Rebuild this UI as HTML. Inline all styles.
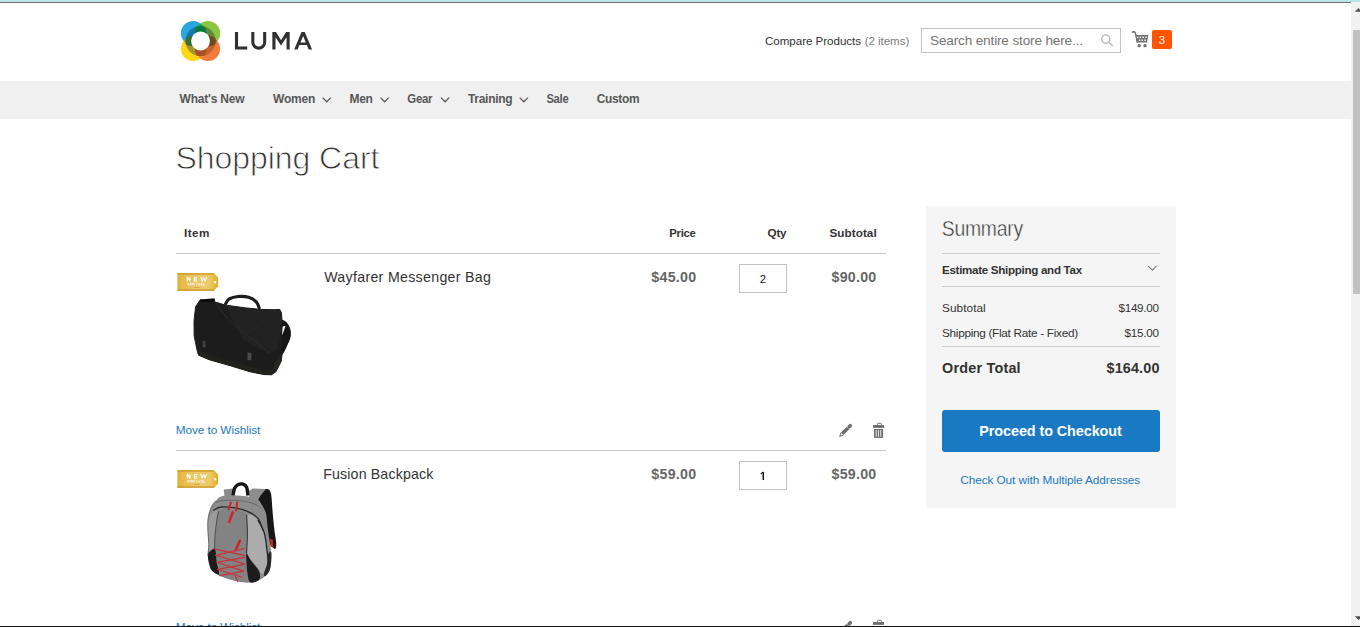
<!DOCTYPE html>
<html lang="en">
<head>
<meta charset="utf-8">
<title>Shopping Cart</title>
<style>
html,body{margin:0;padding:0;background:#fff;overflow:hidden;}
body{width:1360px;height:627px;position:relative;font-family:"Liberation Sans",sans-serif;}
.a{position:absolute;}
#topbar1{left:0;top:0;width:1360px;height:2px;background:#b9e3e7;}
#topbar2{left:0;top:2px;width:1351px;height:1px;background:#6c726f;}
#nav{left:0;top:81px;width:1351px;height:38px;background:#f0f0f0;}
#sbtrack{left:1351px;top:2px;width:9px;height:624px;background:#f1f1f1;}
#sbthumb{left:1353px;top:30px;width:7px;height:264px;background:#c1c1c1;}
#bottomline{left:0;top:626px;width:1360px;height:1px;background:#0c0c0c;}
#search{left:921px;top:28px;width:198px;height:23px;border:1px solid #c2c2c2;background:#fff;}
#badge3{left:1152px;top:30px;width:20px;height:19px;background:#ff5501;border-radius:2px;}
.hl{height:1px;background:#cccccc;}
.qty{width:46px;height:27px;border:1px solid #c2c2c2;background:#fff;left:739px;}
#summary{left:926px;top:206px;width:250px;height:302px;background:#f5f5f5;}
#btn{left:942px;top:410px;width:218px;height:42px;background:#1979c3;border-radius:3px;}
svg{position:absolute;left:0;top:0;overflow:visible;}
svg text{font-family:"Liberation Sans",sans-serif;white-space:pre;}
</style>
</head>
<body>
<div class="a" id="topbar1"></div>
<div class="a" id="topbar2"></div>
<div class="a" id="nav"></div>
<div class="a" id="sbtrack"></div>
<div class="a" id="sbthumb"></div>
<div class="a" id="search"></div>
<div class="a" id="badge3"></div>
<div class="a" id="summary"></div>
<div class="a" id="btn"></div>

<!-- table lines -->
<div class="a hl" style="left:176px;top:253px;width:710px;"></div>
<div class="a hl" style="left:176px;top:450px;width:710px;"></div>
<!-- summary lines -->
<div class="a hl" style="left:942px;top:253px;width:218px;"></div>
<div class="a hl" style="left:942px;top:286px;width:218px;"></div>
<div class="a hl" style="left:942px;top:346px;width:218px;"></div>
<!-- qty boxes -->
<div class="a qty" style="top:264px;"></div>
<div class="a qty" style="top:461px;"></div>

<!--IMAGES_START-->
<svg width="1360" height="627" viewBox="0 0 1360 627">
<defs>
<filter id="soft" x="-5%" y="-5%" width="110%" height="110%"><feGaussianBlur stdDeviation="0.55"/></filter>
<filter id="soft2" x="-5%" y="-5%" width="110%" height="110%"><feGaussianBlur stdDeviation="0.3"/></filter>
<linearGradient id="gold" x1="0" y1="0" x2="1" y2="0">
 <stop offset="0" stop-color="#dfae34"/><stop offset="0.12" stop-color="#e6bb4c"/><stop offset="0.5" stop-color="#ecca6c"/><stop offset="0.8" stop-color="#ecc968"/><stop offset="1" stop-color="#e2ac22"/>
</linearGradient>
<linearGradient id="goldv" x1="0" y1="0" x2="0" y2="1">
 <stop offset="0" stop-color="#c9961d" stop-opacity=".9"/><stop offset="0.14" stop-color="#d9a92f" stop-opacity=".0"/><stop offset="0.86" stop-color="#d9a92f" stop-opacity="0"/><stop offset="1" stop-color="#c9961d" stop-opacity=".9"/>
</linearGradient>
<g id="badge">
 <path d="M177.4,272.9 H213.7 L218.1,277.6 V286.6 L213.7,291.1 H177.4 Z" fill="url(#gold)"/>
 <path d="M177.4,272.9 H213.7 L218.1,277.6 V286.6 L213.7,291.1 H177.4 Z" fill="url(#goldv)"/>
 <rect x="214.1" y="281.1" width="2.1" height="2.2" fill="#fff"/>
 <path d="M187.25,281.4 V276.9 L190.05,281.4 V276.9 M197.05,277.4 H194.4 V280.9 H197.05 M194.4,279.15 H196.6 M200.75,276.9 L202.2,281.2 L203.65,277.6 L205.1,281.2 L206.55,276.9" fill="none" stroke="#fff" stroke-width="1.05" stroke-linejoin="bevel"/>
 <path d="M187.25,285.35 L188.25,283.25 L189.25,285.35 M187.70,284.65 H188.80 M189.97,285.35 V283.25 H191.47 V284.30 H189.97 M190.77,284.30 L191.77,285.35 M192.69,285.35 V283.25 H194.19 V284.30 H192.69 M193.49,284.30 L194.49,285.35 M196.41,283.25 V285.35 M198.13,283.25 L199.13,285.35 L200.13,283.25 M200.85,285.35 L201.85,283.25 L202.85,285.35 M201.30,284.65 H202.40 M203.57,283.25 V285.35 H205.27" fill="none" stroke="#fff" stroke-width="0.7" opacity=".85"/>
 <path d="M178.6,274.5 H213.2 M178.6,289.5 H213.2" stroke="#c4952a" stroke-width="0.6" opacity=".75" fill="none"/>
 <rect x="194" y="287.3" width="5.6" height="0.7" fill="#b98a25" opacity=".7"/>
</g>
</defs>
<g filter="url(#soft)">
<path d="M281.4,321.1 C282.1,318.8 284.7,320.8 286.2,322.1 C287.7,323.5 289.6,326.6 290.3,329.1 C291.0,331.6 291.2,334.1 290.6,337.0 C290.0,339.8 288.2,343.5 286.8,346.4 C285.4,349.3 284.1,352.7 282.3,354.4 C280.5,356.1 277.5,357.3 275.9,356.7 C274.3,356.0 272.4,352.9 272.9,350.6 C273.3,348.3 277.1,345.6 278.6,343.0 C280.2,340.5 281.5,339.1 282.0,335.5 C282.4,331.8 280.7,323.3 281.4,321.1 Z" fill="#141414"/>
<path d="M225.6,303.9 C226.2,303.1 226.9,300.3 228.9,299.1 C231.0,297.9 234.7,296.8 238.0,296.5 C241.3,296.2 245.6,296.4 248.6,297.3 C251.7,298.2 254.4,300.1 256.2,301.8 C258.0,303.6 258.7,306.9 259.2,307.9" fill="none" stroke="#1a1a1a" stroke-width="3.1" stroke-linecap="round"/>
<path d="M200.2,299.8 L207.7,300.6 L215.3,302.1 L225.9,305.2 L245.6,307.9 L260.8,309.4 L274.4,309.7 L279.7,309.4 L281.4,312.7 L282.0,320.3 L282.3,335.5 L282.0,355.2 L281.2,361.2 L275.9,371.8 L271.4,374.8 L263.8,374.5 L250.2,371.8 L230.5,365.8 L209.2,359.7 L198.6,355.2 L197.1,350.6 L194.1,335.5 L194.1,320.3 L195.6,306.7 Z" fill="#1b1b1b" stroke="#1b1b1b" stroke-width="1" stroke-linejoin="round"/>
<path d="M196.4,308.2 C199.1,302.9 207.3,301.2 213.0,303.6 C218.7,306.0 229.2,316.5 230.5,322.6 C231.7,328.6 226.3,337.9 220.6,340.0 C214.9,342.1 200.4,340.8 196.4,335.5 C192.3,330.2 193.6,313.5 196.4,308.2 Z" fill="#252525" opacity=".35"/>
<path d="M200.2,299.4 L214.5,298.3 L215.3,301.8 L201.7,302.1 Z" fill="#101010"/>
<path d="M225.9,305.2 L245.6,307.9 L260.8,309.4 L274.4,309.7 L279.7,309.4 L281.4,312.7 L282.0,320.3 L278.9,347.6 L269.8,353.6 L242.6,340.0 Z" fill="#232323"/>
<path d="M198.6,350.6 L209.2,354.4 L230.5,360.5 L250.2,366.5 L263.8,369.5 L272.1,369.5 L275.9,371.8 L271.4,374.8 L263.8,374.5 L250.2,371.8 L230.5,365.8 L209.2,359.7 L198.6,355.2 Z" fill="#23231f"/>
<path d="M272.1,369.5 L278.9,355.2 L282.0,355.2 L281.2,361.2 L275.9,371.8 Z" fill="#262622"/>
<path d="M282.7,326.4 L285.6,325.8 L283.5,331.7 L282.0,335.5 Z" fill="#fff"/>
<path d="M215.3,302.1 C217.8,305.4 225.4,316.5 230.5,321.8 C235.5,327.1 239.0,328.6 245.6,333.9 C252.2,339.2 265.8,350.4 269.8,353.6" fill="none" stroke="#2e2e2e" stroke-width="0.8"/>
<path d="M245.6,333.9 C247.4,332.7 253.2,328.6 256.2,326.4 C259.2,324.1 262.5,321.3 263.8,320.3" fill="none" stroke="#2c2c2c" stroke-width="0.6"/>
<path d="M202.4,340.8 L205.5,341.2 L205.8,347.6 L202.7,347.3 Z" fill="#3d3d3d"/>
<path d="M247.4,352.4 L251.4,353.0 L251.4,360.5 L247.4,360.0 Z" fill="#484848"/>
</g>
<g filter="url(#soft)">
<path d="M258.0,492.4 C259.5,491.0 264.6,488.8 266.7,489.1 C268.9,489.3 270.0,489.8 271.0,493.8 C271.9,497.8 272.1,507.0 272.7,513.1 C273.3,519.3 273.9,525.7 274.5,530.7 C275.0,535.7 276.1,539.9 276.2,543.0 C276.3,546.0 276.0,548.5 275.2,549.0 C274.3,549.4 272.3,547.2 271.1,545.6 C270.0,544.0 269.0,542.5 268.1,539.5 C267.3,536.4 266.8,531.6 266.0,527.2 C265.3,522.8 264.6,516.9 263.6,513.1 C262.6,509.3 261.1,506.9 260.1,504.3 C259.1,501.8 258.0,499.7 257.6,497.7 C257.3,495.7 256.4,493.8 258.0,492.4 Z" fill="#171717"/>
<path d="M248.3,491.2 L252.7,488.5 L265.9,488.9 L260.6,495.6 L258.0,500.0 L249.2,497.0 Z" fill="#8d8d8d"/>
<path d="M223.7,489.4 L233.4,488.5 L233.7,495.9 L224.6,496.3 Z" fill="#8b8b8b"/>
<path d="M233.0,495.6 C233.3,494.3 233.8,490.0 234.6,488.2 C235.4,486.4 236.5,485.3 237.9,484.7 C239.3,484.0 241.6,483.7 243.0,484.1 C244.5,484.6 245.7,485.2 246.5,487.1 C247.4,489.0 247.7,494.2 247.9,495.6" fill="none" stroke="#161616" stroke-width="3.4"/>
<path d="M215.8,500.8 C217.3,499.4 218.1,497.3 221.1,496.4 C224.0,495.6 229.0,495.6 233.4,495.6 C237.8,495.6 243.3,495.7 247.4,496.4 C251.5,497.2 255.6,498.6 258.0,500.0 C260.3,501.3 260.2,502.1 261.5,504.3 C262.8,506.5 264.8,509.3 265.9,513.1 C266.9,516.9 267.0,522.8 267.6,527.2 C268.2,531.6 268.8,535.4 269.4,539.5 C270.0,543.6 270.8,548.0 271.1,551.8 C271.4,555.6 271.4,559.1 271.1,562.3 C270.8,565.5 270.4,568.7 269.4,571.1 C268.3,573.4 266.9,574.7 265.0,576.3 C263.1,578.0 260.6,579.7 258.0,580.7 C255.3,581.8 253.0,582.5 249.2,582.5 C245.4,582.5 239.8,581.8 235.1,580.7 C230.4,579.7 224.9,578.0 221.1,576.3 C217.3,574.7 214.2,572.8 212.3,571.1 C210.4,569.3 210.4,568.4 209.7,565.8 C208.9,563.2 208.0,558.8 207.9,555.3 C207.8,551.8 208.8,548.8 208.8,544.7 C208.8,540.6 208.0,534.8 207.9,530.7 C207.8,526.6 207.6,523.4 207.9,520.1 C208.2,516.9 208.9,513.9 209.7,511.4 C210.4,508.9 211.3,507.0 212.3,505.2 C213.3,503.5 214.3,502.3 215.8,500.8 Z" fill="#8c8c8c"/>
<path d="M208.8,520.1 C209.5,517.2 210.8,514.6 212.3,513.1 C213.8,511.7 217.1,508.4 217.6,511.4 C218.0,514.3 215.5,524.4 214.9,530.7 C214.3,537.0 215.0,545.6 214.0,549.1 C213.1,552.6 210.0,552.5 209.1,551.8 C208.3,551.0 209.0,548.2 208.8,544.7 C208.6,541.2 207.9,534.8 207.9,530.7 C207.9,526.6 208.0,523.1 208.8,520.1 Z" fill="#9c9c9c"/>
<path d="M218.4,511.4 C221.1,507.7 226.9,508.1 231.6,508.7 C236.3,509.3 243.9,510.6 246.5,514.9 C249.2,519.1 247.4,527.8 247.4,534.2 C247.4,540.6 246.5,547.1 246.5,553.5 C246.5,560.0 246.8,568.1 247.4,572.8 C248.0,577.6 252.1,580.7 250.1,582.0 C248.0,583.3 240.0,581.7 235.1,580.7 C230.3,579.8 223.9,577.5 221.1,576.3 C218.3,575.2 219.2,576.1 218.4,573.7 C217.7,571.4 217.4,566.4 216.7,562.3 C216.0,558.2 214.6,554.4 214.4,549.1 C214.2,543.9 214.8,537.0 215.5,530.7 C216.1,524.4 215.7,515.0 218.4,511.4 Z" fill="#838383"/>
<path d="M248.3,514.9 C250.0,512.5 255.3,517.2 258.0,520.1 C260.6,523.1 262.6,527.8 264.1,532.4 C265.6,537.1 266.1,543.3 266.7,548.2 C267.4,553.2 268.1,558.5 268.0,562.3 C267.8,566.1 266.9,569.2 265.9,571.1 C264.8,573.0 262.6,574.0 261.5,573.7 C260.3,573.4 260.4,571.5 258.8,569.3 C257.2,567.1 253.7,563.2 251.8,560.5 C249.9,557.9 248.1,557.9 247.4,553.5 C246.7,549.1 247.6,540.6 247.8,534.2 C247.9,527.8 246.6,517.2 248.3,514.9 Z" fill="#acacac"/>
<path d="M208.8,552.6 C210.0,551.3 213.6,547.5 214.9,549.1 C216.2,550.7 216.0,558.1 216.7,562.3 C217.4,566.5 219.7,572.8 219.0,574.2 C218.2,575.7 213.8,572.5 212.3,571.1 C210.7,569.7 210.4,568.2 209.7,565.8 C208.9,563.5 208.0,559.2 207.9,557.0 C207.8,554.8 207.6,554.0 208.8,552.6 Z" fill="#1d1d1d"/>
<path d="M246.5,553.5 C247.3,553.2 249.0,557.9 250.9,560.5 C252.8,563.2 256.4,566.7 258.0,569.3 C259.5,572.0 260.1,574.4 260.1,576.3 C260.1,578.3 259.6,579.7 258.0,580.7 C256.3,581.7 251.8,583.6 250.1,582.3 C248.3,581.0 248.0,576.2 247.4,572.8 C246.8,569.5 246.7,565.5 246.5,562.3 C246.4,559.1 245.8,553.8 246.5,553.5 Z" fill="#1b1b1b"/>
<path d="M267.6,555.3 C268.2,553.2 270.5,550.6 271.1,551.8 C271.7,552.9 271.4,559.1 271.1,562.3 C270.8,565.5 270.4,568.7 269.4,571.1 C268.3,573.4 265.9,576.1 265.0,576.3 C264.1,576.6 263.7,574.9 264.1,572.8 C264.5,570.8 267.0,567.0 267.6,564.1 C268.2,561.1 267.0,557.3 267.6,555.3 Z" fill="#2a2a2a"/>
<path d="M213.2,510.5 C214.5,509.9 217.4,507.4 221.1,507.0 C224.7,506.5 230.7,507.1 235.1,507.9 C239.5,508.6 243.6,509.6 247.4,511.4 C251.2,513.1 255.3,515.2 258.0,518.4 C260.6,521.6 262.3,528.6 263.2,530.7" fill="none" stroke="#2c2c2c" stroke-width="1.3"/>
<path d="M215.8,502.1 C217.6,501.8 221.7,500.5 226.3,500.3 C231.0,500.2 238.9,500.5 243.9,501.2 C248.9,501.9 253.3,503.4 256.2,504.7 C259.1,506.0 260.3,508.1 261.1,508.7" fill="none" stroke="#5a5a5a" stroke-width="0.7"/>
<path d="M218.4,511.4 C217.9,514.6 216.1,524.4 215.5,530.7 C214.8,537.0 214.6,546.1 214.4,549.1" fill="none" stroke="#2b2b2b" stroke-width="0.6"/>
<path d="M246.5,514.9 C246.7,518.1 247.4,527.8 247.4,534.2 C247.4,540.6 246.7,550.3 246.5,553.5" fill="none" stroke="#252525" stroke-width="0.9"/>
<path d="M258.0,520.1 C259.0,522.2 262.6,527.8 264.1,532.4 C265.6,537.1 266.1,543.3 266.7,548.2 C267.4,553.2 268.2,558.3 268.0,562.3 C267.7,566.3 265.8,570.3 265.3,572.0" fill="none" stroke="#242424" stroke-width="1.3"/>
<path d="M215.8,500.8 C215.2,501.6 213.3,503.5 212.3,505.2 C211.3,507.0 210.4,508.9 209.7,511.4 C208.9,513.9 208.2,516.9 207.9,520.1 C207.6,523.4 207.8,526.6 207.9,530.7 C208.0,534.8 208.8,540.6 208.8,544.7 C208.8,548.8 208.0,553.5 207.9,555.3" fill="none" stroke="#555" stroke-width="0.8"/>
<path d="M230.9,502.6 L228.5,509.6" fill="none" stroke="#d0242c" stroke-width="2.0" stroke-linecap="round"/>
<path d="M237.1,502.6 L236.2,510.5" fill="none" stroke="#d0242c" stroke-width="2.0" stroke-linecap="round"/>
<path d="M232.7,512.4 L229.2,521.9" fill="none" stroke="#d0242c" stroke-width="2.6" stroke-linecap="round"/>
<path d="M239.9,540.7 L235.7,550.0" fill="none" stroke="#d0242c" stroke-width="2.5" stroke-linecap="round"/>
<path d="M214.9,549.1 L244.3,555.3" fill="none" stroke="#c8323a" stroke-width="1.2" stroke-linecap="round"/>
<path d="M243.9,548.6 L215.8,555.3" fill="none" stroke="#c8323a" stroke-width="1.2" stroke-linecap="round"/>
<path d="M215.8,555.3 L245.0,564.1" fill="none" stroke="#c8323a" stroke-width="1.2" stroke-linecap="round"/>
<path d="M244.8,557.4 L216.7,562.3" fill="none" stroke="#c8323a" stroke-width="1.2" stroke-linecap="round"/>
<path d="M216.7,562.3 L243.9,571.1" fill="none" stroke="#c8323a" stroke-width="1.2" stroke-linecap="round"/>
<path d="M244.3,564.4 L217.6,569.3" fill="none" stroke="#c8323a" stroke-width="1.2" stroke-linecap="round"/>
<path d="M217.6,569.3 L242.1,577.2" fill="none" stroke="#c8323a" stroke-width="1.2" stroke-linecap="round"/>
<path d="M243.2,571.4 L219.7,575.6" fill="none" stroke="#c8323a" stroke-width="1.2" stroke-linecap="round"/>
<path d="M235.1,576.3 L237.8,581.6" fill="none" stroke="#c8323a" stroke-width="1.2" stroke-linecap="round"/>
</g>
<path d="M269.9,538.6 L272.9,539.5 L273.4,547.4 L270.6,546.5 Z" fill="#b5262c" filter="url(#soft)"/>
<use href="#badge"/>
<use href="#badge" y="197"/>
</svg>
<!--IMAGES_END-->

<svg width="1360" height="627" viewBox="0 0 1360 627">
<!--ICONS_START-->
<defs>
  <clipPath id="cB"><circle cx="193.15" cy="33.15" r="12.2"/></clipPath>
  <clipPath id="cG"><circle cx="207.95" cy="33.15" r="12.2"/></clipPath>
  <clipPath id="cO"><circle cx="207.95" cy="48.85" r="12.2"/></clipPath>
  <clipPath id="cY"><circle cx="193.15" cy="48.85" r="12.2"/></clipPath>
  <clipPath id="wB"><circle cx="193.15" cy="33.15" r="13.1"/></clipPath>
  <clipPath id="wG"><circle cx="207.95" cy="33.15" r="13.1"/></clipPath>
  <clipPath id="wO"><circle cx="207.95" cy="48.85" r="13.1"/></clipPath>
  <clipPath id="wY"><circle cx="193.15" cy="48.85" r="13.1"/></clipPath>
</defs>
<!-- LUMA logo mark -->
<g id="logo">
  <circle cx="193.15" cy="33.15" r="12.2" fill="#27a7df"/>
  <circle cx="207.95" cy="33.15" r="12.2" fill="#8cc63f"/>
  <circle cx="207.95" cy="48.85" r="12.2" fill="#f47b3b"/>
  <circle cx="193.15" cy="48.85" r="12.2" fill="#ffd616"/>
  <!-- ring darkening per colour -->
  <circle cx="200.55" cy="41" r="15.1" fill="#1579a8" clip-path="url(#cB)"/>
  <circle cx="200.55" cy="41" r="15.1" fill="#5d8b3d" clip-path="url(#cG)"/>
  <circle cx="200.55" cy="41" r="15.1" fill="#c7612c" clip-path="url(#cO)"/>
  <circle cx="200.55" cy="41" r="15.1" fill="#a3952e" clip-path="url(#cY)"/>
  <!-- lens tips -->
  <g clip-path="url(#cB)"><circle cx="207.95" cy="33.15" r="12.2" fill="#13a551"/></g>
  <g clip-path="url(#cG)"><circle cx="207.95" cy="48.85" r="12.2" fill="#9a6a3a"/></g>
  <g clip-path="url(#cO)"><circle cx="193.15" cy="48.85" r="12.2" fill="#f08235"/></g>
  <g clip-path="url(#cY)"><circle cx="193.15" cy="33.15" r="12.2" fill="#68a84e"/></g>
  <!-- lens inside ring -->
  <g clip-path="url(#wB)"><g clip-path="url(#wG)"><circle cx="200.55" cy="41" r="15.1" fill="#0b7a3b"/></g></g>
  <g clip-path="url(#wG)"><g clip-path="url(#wO)"><circle cx="200.55" cy="41" r="15.1" fill="#6a4a1f"/></g></g>
  <g clip-path="url(#wO)"><g clip-path="url(#wY)"><circle cx="200.55" cy="41" r="15.1" fill="#a94f25"/></g></g>
  <g clip-path="url(#wY)"><g clip-path="url(#wB)"><circle cx="200.55" cy="41" r="15.1" fill="#3b6f31"/></g></g>
  <circle cx="200.55" cy="41" r="9.4" fill="#fff"/>
</g>
<!-- LUMA wordmark -->
<g fill="#303030" stroke="none">
  <path d="M234.96,32.07 H238.06 V46.6 H247.2 V49.48 H234.96 Z"/>
  <path d="M251.3,32.07 H254.35 V42.2 A4.4,4.4 0 0 0 263.15,42.2 V32.07 H266.2 V42.3 A7.45,7.45 0 0 1 251.3,42.3 Z"/>
  <path d="M272.36,49.48 V32.07 H276 L281.03,40.2 L286.06,32.07 H289.7 V49.48 H286.55 V37.3 L281.03,45.4 L275.51,37.3 V49.48 Z"/>
  <path fill-rule="evenodd" d="M294.2,49.48 L301.5,32.07 H304.75 L312.07,49.48 H308.7 L306.85,44.95 H299.4 L297.55,49.48 Z M300.45,42.4 H305.8 L303.12,35.9 Z"/>
</g>
<!-- nav chevrons -->
<g fill="none" stroke="#575757" stroke-width="1.25">
  <path d="M322.6,97.6 l4.15,4.15 l4.15,-4.15"/>
  <path d="M380.5,97.6 l4.15,4.15 l4.15,-4.15"/>
  <path d="M440.9,97.6 l4.15,4.15 l4.15,-4.15"/>
  <path d="M519.7,97.6 l4.15,4.15 l4.15,-4.15"/>
</g>
<!-- summary chevron -->
<path d="M1148.1,265.9 l4.25,4.25 l4.25,-4.25" fill="none" stroke="#7a7a7a" stroke-width="1.1"/>
<!-- search icon -->
<g fill="none" stroke="#b5b5b5" stroke-width="1.3">
  <circle cx="1105.8" cy="39.1" r="4.15"/>
  <path d="M1108.8,42.2 L1112.5,45.7" stroke-linecap="round"/>
</g>
<!-- cart icon -->
<g id="cart">
  <path d="M1132.5,32 L1133.9,31.7 Q1135,31.6 1135.4,33.2 L1137.3,42" fill="none" stroke="#707070" stroke-width="1.5" stroke-linecap="round"/>
  <path d="M1135.7,35 H1148.4 L1147,42.4 H1137.1 Z" fill="#727272"/>
  <g fill="#fff">
    <rect x="1136.9" y="36.6" width="1.5" height="1.4"/><rect x="1139.7" y="36.6" width="1.5" height="1.4"/><rect x="1142.5" y="36.6" width="1.5" height="1.4"/><rect x="1145.3" y="36.6" width="1.5" height="1.4"/>
    <rect x="1138.8" y="39.5" width="1.5" height="1.4"/><rect x="1141.5" y="39.5" width="1.5" height="1.4"/><rect x="1144.3" y="39.5" width="1.5" height="1.4"/>
  </g>
  <circle cx="1139.2" cy="45.65" r="1.65" fill="#707070"/>
  <circle cx="1145" cy="45.65" r="1.65" fill="#707070"/>
</g>
<!-- scrollbar arrows -->
<path d="M1354.8,11.8 L1358.5,8 L1362.2,11.8 Z" fill="#505050"/>
<path d="M1354.8,616.2 L1358.5,620 L1362.2,616.2 Z" fill="#505050"/>
<!-- pencil + trash icons (row 1 and row 2) -->
<defs>
  <g id="acts">
    <path d="M842.2,433.8 L848,428" stroke="#6f6f6f" stroke-width="3.7" fill="none"/>
    <path d="M849.3,426.7 L850.2,425.8" stroke="#6f6f6f" stroke-width="3.7" fill="none" stroke-linecap="round"/>
    <path d="M839.2,436.9 L840.3,432.6 L843.5,435.8 Z" fill="#6f6f6f"/>
    <circle cx="841.3" cy="434.8" r="0.75" fill="#fff"/>
    <path d="M877.4,425 V424.1 Q877.4,423.3 878.2,423.3 H880.6 Q881.4,423.3 881.4,424.1 V425" fill="none" stroke="#767676" stroke-width="1"/>
    <rect x="873" y="425" width="11" height="2.9" fill="#6f6f6f"/>
    <rect x="874" y="429" width="9.1" height="8.9" fill="#6f6f6f"/>
    <rect x="875.6" y="430" width="1.1" height="6.7" fill="#ddd"/>
    <rect x="877.9" y="430" width="1.1" height="6.7" fill="#ddd"/>
    <rect x="880.2" y="430" width="1.1" height="6.7" fill="#ddd"/>
  </g>
</defs>
<use href="#acts"/>
<use href="#acts" y="197"/>
<!-- qty "1" glyph (no foot serif) -->
<g id="one"><rect x="762.55" y="471.95" width="1.45" height="8.1" fill="#151515"/><path d="M760.75,474 L763,472.15" stroke="#151515" stroke-width="1.05" fill="none"/></g>
<!--ICONS_END-->
<text transform="translate(765.00,44.75) scale(1.0000,1)" style="font-size:11.6px;font-weight:400;fill:#333;letter-spacing:-0.041px;">Compare Products</text>
<text transform="translate(864.75,44.75) scale(1.0000,1)" style="font-size:11.6px;font-weight:400;fill:#7d7d7d;letter-spacing:-0.072px;">(2 items)</text>
<text transform="translate(930.00,44.85) scale(1.0000,1)" style="font-size:13.6px;font-weight:400;fill:#757575;letter-spacing:-0.161px;">Search entire store here...</text>
<text transform="translate(1158.70,44.30) scale(1.0000,1)" style="font-size:11.5px;font-weight:400;fill:#fff;letter-spacing:0.000px;">3</text>
<text transform="translate(179.60,103.10) scale(1.0000,1)" style="font-size:12px;font-weight:700;fill:#575757;letter-spacing:-0.203px;">What's New</text>
<text transform="translate(273.00,103.10) scale(1.0000,1)" style="font-size:12px;font-weight:700;fill:#575757;letter-spacing:-0.196px;">Women</text>
<text transform="translate(349.50,103.10) scale(1.0000,1)" style="font-size:12px;font-weight:700;fill:#575757;letter-spacing:-0.285px;">Men</text>
<text transform="translate(407.30,103.10) scale(0.9559,1)" style="font-size:12px;font-weight:700;fill:#575757;letter-spacing:-0.300px;">Gear</text>
<text transform="translate(468.00,103.10) scale(1.0000,1)" style="font-size:12px;font-weight:700;fill:#575757;letter-spacing:-0.300px;">Training</text>
<text transform="translate(546.40,103.10) scale(0.9373,1)" style="font-size:12px;font-weight:700;fill:#575757;letter-spacing:-0.300px;">Sale</text>
<text transform="translate(596.70,103.10) scale(0.9954,1)" style="font-size:12px;font-weight:700;fill:#575757;letter-spacing:-0.300px;">Custom</text>
<text transform="translate(175.40,169.00) scale(1.0000,1)" style="font-size:32px;font-weight:400;fill:#333;letter-spacing:-0.049px;stroke:#fff;stroke-width:0.85px;">Shopping Cart</text>
<text transform="translate(183.90,237.00) scale(1.0000,1)" style="font-size:11.7px;font-weight:700;fill:#333;letter-spacing:0.500px;">Item</text>
<text transform="translate(669.30,237.00) scale(0.9716,1)" style="font-size:11.7px;font-weight:700;fill:#333;letter-spacing:-0.300px;">Price</text>
<text transform="translate(767.60,237.00) scale(1.0000,1)" style="font-size:11.7px;font-weight:700;fill:#333;letter-spacing:-0.291px;">Qty</text>
<text transform="translate(829.50,237.00) scale(1.0000,1)" style="font-size:11.7px;font-weight:700;fill:#333;letter-spacing:0.058px;">Subtotal</text>
<text transform="translate(324.20,281.70) scale(1.0000,1)" style="font-size:14.2px;font-weight:400;fill:#333;letter-spacing:0.303px;">Wayfarer Messenger Bag</text>
<text transform="translate(651.30,281.80) scale(1.0000,1)" style="font-size:14.2px;font-weight:700;fill:#666;letter-spacing:0.279px;">$45.00</text>
<text transform="translate(831.50,281.80) scale(1.0000,1)" style="font-size:14.2px;font-weight:700;fill:#666;letter-spacing:0.259px;">$90.00</text>
<text transform="translate(759.80,283.20) scale(1.0000,1)" style="font-size:11.3px;font-weight:400;fill:#111;letter-spacing:0.000px;">2</text>
<text transform="translate(175.80,433.80) scale(1.0000,1)" style="font-size:11.8px;font-weight:400;fill:#1979c3;letter-spacing:-0.086px;">Move to Wishlist</text>
<text transform="translate(323.20,478.70) scale(1.0000,1)" style="font-size:14.2px;font-weight:400;fill:#333;letter-spacing:0.147px;">Fusion Backpack</text>
<text transform="translate(651.30,478.80) scale(1.0000,1)" style="font-size:14.2px;font-weight:700;fill:#666;letter-spacing:0.279px;">$59.00</text>
<text transform="translate(831.50,478.80) scale(1.0000,1)" style="font-size:14.2px;font-weight:700;fill:#666;letter-spacing:0.259px;">$59.00</text>
<text transform="translate(175.80,630.80) scale(1.0000,1)" style="font-size:11.8px;font-weight:400;fill:#1979c3;letter-spacing:-0.086px;">Move to Wishlist</text>
<text transform="translate(941.80,236.20) scale(0.9023,1)" style="font-size:21.5px;font-weight:400;fill:#333;letter-spacing:-0.300px;stroke:#f5f5f5;stroke-width:0.45px;">Summary</text>
<text transform="translate(942.00,273.90) scale(0.9824,1)" style="font-size:11.8px;font-weight:700;fill:#333;letter-spacing:-0.300px;">Estimate Shipping and Tax</text>
<text transform="translate(942.00,312.10) scale(1.0000,1)" style="font-size:11.8px;font-weight:400;fill:#333;letter-spacing:0.062px;">Subtotal</text>
<text transform="translate(1118.50,312.10) scale(0.9907,1)" style="font-size:11.8px;font-weight:400;fill:#333;letter-spacing:-0.300px;">$149.00</text>
<text transform="translate(942.00,337.30) scale(1.0000,1)" style="font-size:11.8px;font-weight:400;fill:#333;letter-spacing:-0.300px;">Shipping (Flat Rate - Fixed)</text>
<text transform="translate(1124.60,337.30) scale(0.9937,1)" style="font-size:11.8px;font-weight:400;fill:#333;letter-spacing:-0.300px;">$15.00</text>
<text transform="translate(942.00,372.60) scale(1.0000,1)" style="font-size:14.4px;font-weight:700;fill:#333;letter-spacing:0.211px;">Order Total</text>
<text transform="translate(1106.50,372.60) scale(1.0000,1)" style="font-size:14.4px;font-weight:700;fill:#333;letter-spacing:0.147px;">$164.00</text>
<text transform="translate(979.30,436.00) scale(1.0000,1)" style="font-size:14.4px;font-weight:700;fill:#fff;letter-spacing:-0.080px;">Proceed to Checkout</text>
<text transform="translate(960.20,483.70) scale(1.0000,1)" style="font-size:11.8px;font-weight:400;fill:#1979c3;letter-spacing:-0.070px;">Check Out with Multiple Addresses</text>
</svg>
<div class="a" id="bottomline"></div>
</body>
</html>
